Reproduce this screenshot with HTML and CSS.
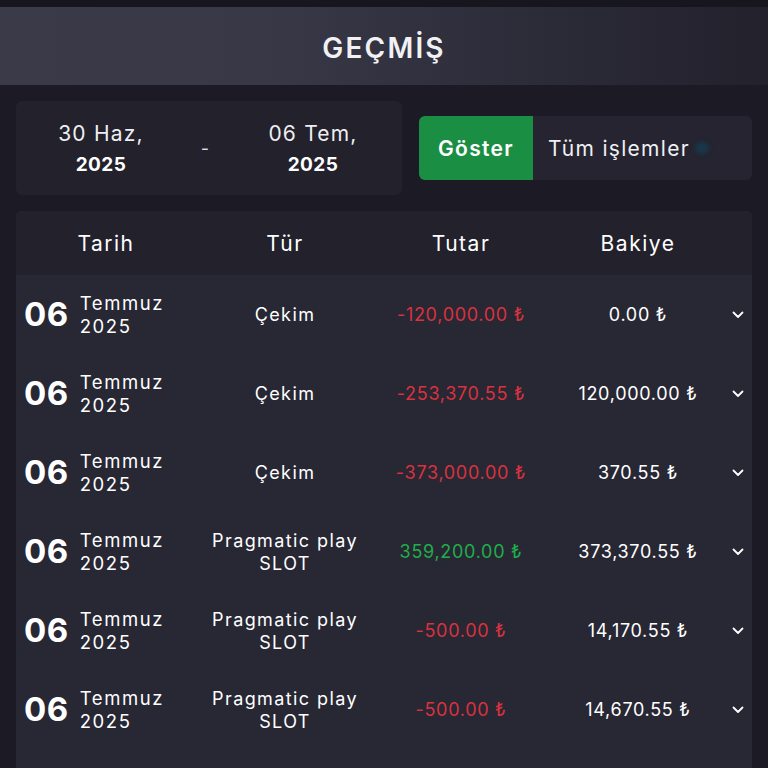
FILE: index.html
```html
<!DOCTYPE html>
<html lang="tr">
<head>
<meta charset="utf-8">
<link rel="stylesheet" href="styles.css">
</head>
<body>
<div class="topstrip"></div>
<header class="title-bar"><h1>GEÇMİŞ</h1></header>
<section class="filters">
  <div class="date-card">
    <div class="date"><span class="dm">30 Haz,</span><span class="yr">2025</span></div>
    <div class="dash">-</div>
    <div class="date"><span class="dm">06 Tem,</span><span class="yr">2025</span></div>
  </div>
  <div class="show-box">
    <button class="show-btn">Göster</button>
    <div class="select"><span class="sel-text">Tüm işlemler</span><span class="sel-dot"></span></div>
  </div>
</section>
<section class="table">
  <div class="row head">
    <div>Tarih</div><div>Tür</div><div>Tutar</div><div>Bakiye</div><div></div>
  </div>
  <div class="row">
    <div class="day"><b>06</b><span>Temmuz<br>2025</span></div>
    <div class="txt">Çekim</div><div class="num neg">-120,000.00 ₺</div><div class="num">0.00 ₺</div>
    <div class="chev"><svg viewBox="0 0 12 8"><path d="M1.5 1.5 6 6l4.5-4.5"/></svg></div>
  </div>
  <div class="row">
    <div class="day"><b>06</b><span>Temmuz<br>2025</span></div>
    <div class="txt">Çekim</div><div class="num neg">-253,370.55 ₺</div><div class="num">120,000.00 ₺</div>
    <div class="chev"><svg viewBox="0 0 12 8"><path d="M1.5 1.5 6 6l4.5-4.5"/></svg></div>
  </div>
  <div class="row">
    <div class="day"><b>06</b><span>Temmuz<br>2025</span></div>
    <div class="txt">Çekim</div><div class="num neg">-373,000.00 ₺</div><div class="num">370.55 ₺</div>
    <div class="chev"><svg viewBox="0 0 12 8"><path d="M1.5 1.5 6 6l4.5-4.5"/></svg></div>
  </div>
  <div class="row">
    <div class="day"><b>06</b><span>Temmuz<br>2025</span></div>
    <div class="txt">Pragmatic play<br>SLOT</div><div class="num pos">359,200.00 ₺</div><div class="num">373,370.55 ₺</div>
    <div class="chev"><svg viewBox="0 0 12 8"><path d="M1.5 1.5 6 6l4.5-4.5"/></svg></div>
  </div>
  <div class="row">
    <div class="day"><b>06</b><span>Temmuz<br>2025</span></div>
    <div class="txt">Pragmatic play<br>SLOT</div><div class="num neg">-500.00 ₺</div><div class="num">14,170.55 ₺</div>
    <div class="chev"><svg viewBox="0 0 12 8"><path d="M1.5 1.5 6 6l4.5-4.5"/></svg></div>
  </div>
  <div class="row">
    <div class="day"><b>06</b><span>Temmuz<br>2025</span></div>
    <div class="txt">Pragmatic play<br>SLOT</div><div class="num neg">-500.00 ₺</div><div class="num">14,670.55 ₺</div>
    <div class="chev"><svg viewBox="0 0 12 8"><path d="M1.5 1.5 6 6l4.5-4.5"/></svg></div>
  </div>
  <div class="row">
    <div class="day"><b>06</b><span>Temmuz<br>2025</span></div>
    <div class="txt">Pragmatic play<br>SLOT</div><div class="num neg">-500.00 ₺</div><div class="num">15,170.55 ₺</div>
    <div class="chev"><svg viewBox="0 0 12 8"><path d="M1.5 1.5 6 6l4.5-4.5"/></svg></div>
  </div>
</section>
</body>
</html>
```
FILE: styles.css
```css
* { box-sizing: border-box; }
html, body { margin: 0; padding: 0; }
body {
  background: #1c1b25;
  color: #ffffff;
  font-family: Inter, "Open Sans", sans-serif;
  height: 768px;
  overflow: hidden;
}
.topstrip { height: 7px; background: #17161f; }
.title-bar {
  height: 78px;
  display: flex;
  align-items: center;
  justify-content: center;
  padding-top: 4px;
  background: linear-gradient(90deg, #3b3a49 0%, #393847 35%, #2a2936 75%, #22212c 100%);
}
.title-bar h1 {
  margin: 0;
  font-size: 28px;
  font-weight: 600;
  letter-spacing: 2.2px;
  color: #f1f1f4;
}
.filters {
  display: flex;
  align-items: center;
  gap: 17px;
  padding: 16px;
}
.date-card {
  width: 386px;
  height: 94px;
  background: #22212c;
  border-radius: 6px;
  display: grid;
  grid-template-columns: 170px 38px 178px;
  align-items: center;
}
.date {
  display: flex;
  flex-direction: column;
  align-items: center;
  gap: 7px;
}
.dm { font-size: 21px; font-weight: 400; color: #eeeef2; letter-spacing: 1.2px; }
.yr { font-size: 19px; font-weight: 700; letter-spacing: 0.4px; }
.dash { text-align: center; font-size: 18px; color: #d8d8dd; }
.show-box {
  flex: 1;
  height: 64px;
  display: flex;
  border-radius: 6px;
  overflow: hidden;
  background: #252430;
}
.show-btn {
  width: 114px;
  border: none;
  background: #1a8e42;
  color: #ffffff;
  font-family: inherit;
  font-size: 21px;
  font-weight: 600;
  letter-spacing: 1.3px;
  padding: 0;
}
.select {
  flex: 1;
  display: flex;
  align-items: center;
  padding-left: 15px;
}
.sel-text {
  font-size: 21px;
  color: #f0f0f4;
  letter-spacing: 1.3px;
  width: 147px;
  overflow: hidden;
  white-space: nowrap;
}
.sel-dot {
  width: 14px;
  height: 12px;
  border-radius: 50%;
  background: #17384a;
  filter: blur(2px);
}
.table {
  margin: 0 16px;
  background: #282734;
  border-radius: 6px 6px 0 0;
  overflow: hidden;
}
.row {
  display: grid;
  grid-template-columns: 180px 178px 174px 180px 24px;
  align-items: center;
  height: 79px;
  text-align: center;
  font-size: 18px;
  line-height: 23px;
}
.row.head {
  height: 64px;
  background: #22212c;
  font-size: 21px;
  letter-spacing: 1.5px;
}
.txt { letter-spacing: 1.4px; }
.num { letter-spacing: 0.7px; }
.day {
  display: flex;
  align-items: center;
  gap: 11px;
  padding-left: 8px;
  text-align: left;
}
.day b { font-size: 33px; font-weight: 700; letter-spacing: 0.5px; }
.day span { font-size: 18.5px; line-height: 23px; letter-spacing: 1.6px; }
.neg { color: #d9323e; }
.pos { color: #1fae4a; }
.chev { display: flex; justify-content: center; padding-right: 4px; }
.chev svg { width: 12px; height: 8px; fill: none; stroke: #ffffff; stroke-width: 1.8; stroke-linecap: round; stroke-linejoin: round; }
```
